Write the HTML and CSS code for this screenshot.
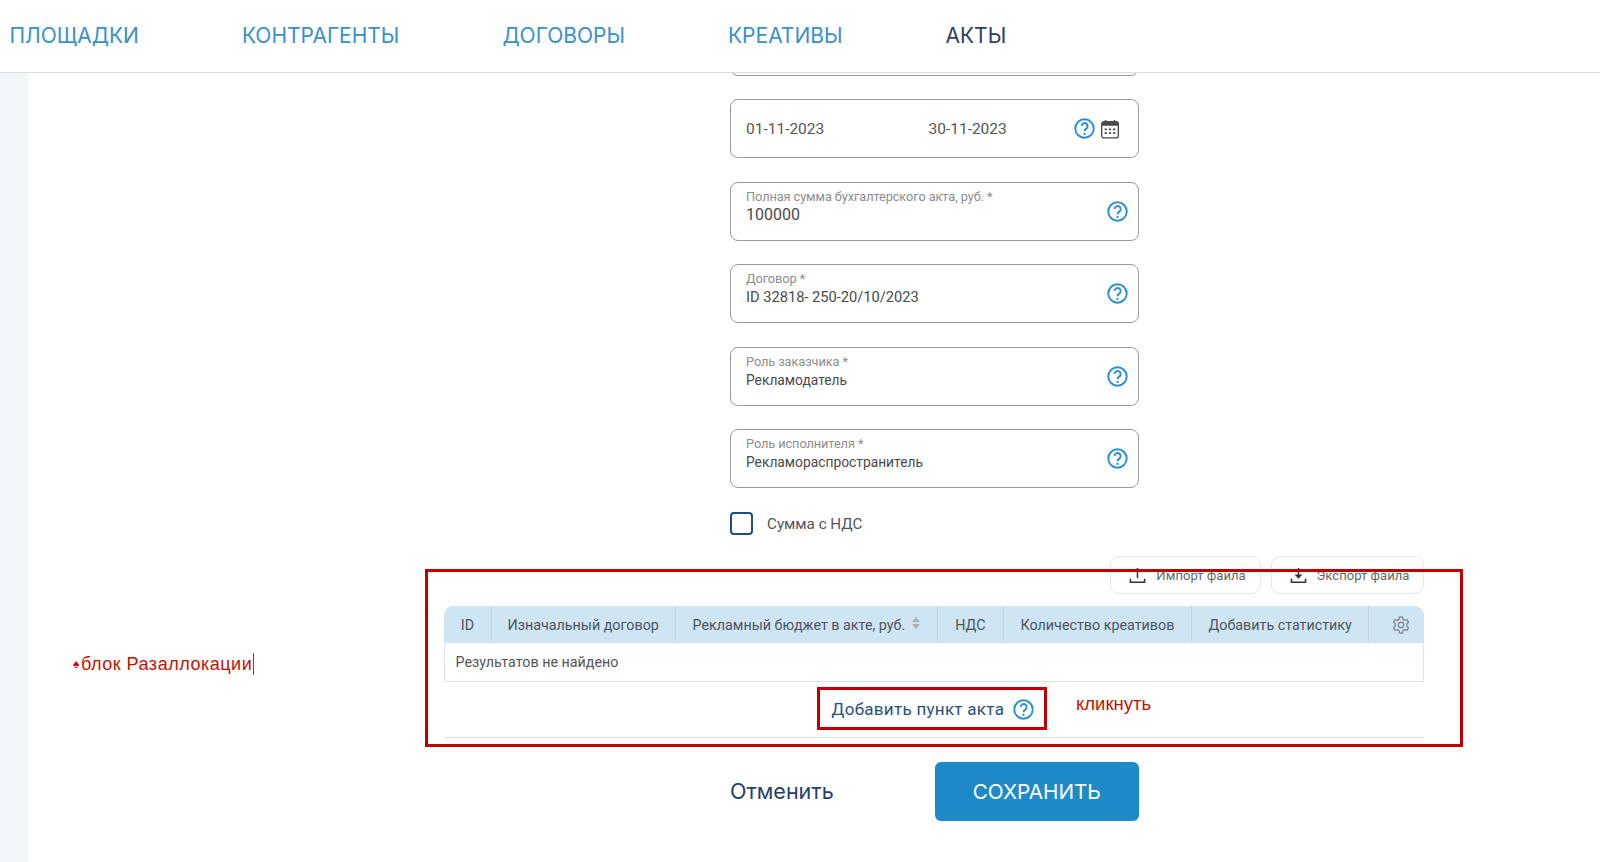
FILE: index.html
```html
<!DOCTYPE html>
<html lang="ru">

<head>
    <meta charset="UTF-8">
    <meta name="viewport" content="width=device-width, initial-scale=1.0">
    <title>Акты</title>
    <link rel="stylesheet" href="styles.css">
</head>

<body>
    <svg class="sprite" aria-hidden="true">
        <symbol id="i-help" viewBox="0 0 20 20">
            <circle cx="10" cy="10" r="8.8" fill="none" stroke="currentColor" stroke-width="1.8" />
            <path d="M7.2 7.7a2.9 2.9 0 1 1 4.5 2.4c-1.1.7-1.7 1.2-1.7 2.6" fill="none" stroke="currentColor" stroke-width="1.8" />
            <circle cx="10" cy="15.2" r="1.1" fill="currentColor" />
        </symbol>
        <symbol id="i-calendar" viewBox="0 0 18 18">
            <rect x="1.500" y="2.500" width="15" height="14.500" rx="2" fill="none" stroke="currentColor" stroke-width="1.200" />
            <path d="M1.500 6h15v-2l-1-1.500h-13l-1 1.500z" fill="currentColor" />
            <path d="M5 .8v3M13 .8v3" stroke="currentColor" stroke-width="1.300" />
            <path d="M4.200 8.500h2v1.600h-2zM8 8.500h2v1.600h-2zM11.800 8.500h2v1.600h-2zM4.200 12h2v1.600h-2zM8 12h2v1.600h-2zM11.800 12h2v1.600h-2z" fill="currentColor" />
        </symbol>
        <symbol id="i-upload" viewBox="0 0 18 18">
            <path d="M9 12V2M5.500 5.200 9 1.800l3.500 3.400M1.500 12.500v3.700h15v-3.700" fill="none" stroke="currentColor" stroke-width="1.600" />
        </symbol>
        <symbol id="i-download" viewBox="0 0 18 18">
            <path d="M9 1v10" fill="none" stroke="currentColor" stroke-width="1.600" />
            <path d="M4.800 8h8.400L9 12.500z" fill="currentColor" />
            <path d="M1.500 12.500v3.700h15v-3.700" fill="none" stroke="currentColor" stroke-width="1.600" />
        </symbol>
        <symbol id="i-gear" viewBox="0 0 18 18">
            <circle cx="9" cy="9" r="2.700" fill="none" stroke="currentColor" stroke-width="1.400" />
            <path d="M7.500 1h3l.5 2.300 1.700 1 2.300-.7 1.500 2.600-1.700 1.600v2.400l1.700 1.600-1.500 2.600-2.300-.7-1.700 1-.5 2.300h-3l-.5-2.300-1.700-1-2.300.7-1.500-2.600 1.700-1.600v-2.400l-1.700-1.600 1.500-2.600 2.300.7 1.700-1z" fill="none" stroke="currentColor" stroke-width="1.400" stroke-linejoin="round" />
        </symbol>
    </svg>

    <header class="topbar">
        <nav class="nav">
            <a class="nav-link">ПЛОЩАДКИ</a>
            <a class="nav-link">КОНТРАГЕНТЫ</a>
            <a class="nav-link">ДОГОВОРЫ</a>
            <a class="nav-link">КРЕАТИВЫ</a>
            <a class="nav-link active">АКТЫ</a>
        </nav>
    </header>

    <div class="layout">
        <aside class="sidebar"></aside>

        <main class="content">
            <div class="note-left"><span class="note-mark">♠</span>блок Разаллокации<span class="caret"></span></div>

            <form class="form-col">
                <div class="field field-cut"></div>

                <div class="field field-date">
                    <span class="date-val date-from">01-11-2023</span>
                    <span class="date-val">30-11-2023</span>
                    <svg class="icon-help"><use href="#i-help" /></svg>
                    <svg class="icon-cal"><use href="#i-calendar" /></svg>
                </div>

                <div class="field">
                    <div class="field-body">
                        <div class="field-label">Полная сумма бухгалтерского акта, руб. *</div>
                        <div class="field-value value-big">100000</div>
                    </div>
                    <svg class="icon-help"><use href="#i-help" /></svg>
                </div>

                <div class="field">
                    <div class="field-body">
                        <div class="field-label">Договор *</div>
                        <div class="field-value">ID 32818- 250-20/10/2023</div>
                    </div>
                    <svg class="icon-help"><use href="#i-help" /></svg>
                </div>

                <div class="field">
                    <div class="field-body">
                        <div class="field-label">Роль заказчика *</div>
                        <div class="field-value value-role">Рекламодатель</div>
                    </div>
                    <svg class="icon-help"><use href="#i-help" /></svg>
                </div>

                <div class="field">
                    <div class="field-body">
                        <div class="field-label">Роль исполнителя *</div>
                        <div class="field-value value-role">Рекламораспространитель</div>
                    </div>
                    <svg class="icon-help"><use href="#i-help" /></svg>
                </div>

                <label class="check-row">
                    <span class="check-box"></span>
                    <span>Сумма с НДС</span>
                </label>
            </form>

            <section class="realloc">
                <div class="file-actions">
                    <button class="file-btn" type="button"><svg class="icon-file"><use href="#i-upload" /></svg>Импорт файла</button>
                    <button class="file-btn btn-export" type="button"><svg class="icon-file"><use href="#i-download" /></svg>Экспорт файла</button>
                </div>

                <table class="grid">
                    <thead>
                        <tr>
                            <th class="col-id">ID</th>
                            <th class="col-contract">Изначальный договор</th>
                            <th class="col-budget">Рекламный бюджет в акте, руб. <span class="sort"><i class="sort-up"></i><i class="sort-down"></i></span></th>
                            <th class="col-vat">НДС</th>
                            <th class="col-count">Количество креативов</th>
                            <th class="col-stat">Добавить статистику</th>
                            <th class="col-gear"><svg class="icon-gear"><use href="#i-gear" /></svg></th>
                        </tr>
                    </thead>
                    <tbody>
                        <tr>
                            <td colspan="7">Результатов не найдено</td>
                        </tr>
                    </tbody>
                </table>

                <div class="add-row">
                    <a class="add-link">Добавить пункт акта</a>
                    <svg class="icon-help"><use href="#i-help" /></svg>
                    <span class="note-box"></span>
                    <span class="note-click">кликнуть</span>
                </div>

                <div class="red-frame"></div>
            </section>

            <div class="form-actions">
                <a class="cancel">Отменить</a>
                <button class="save" type="button">СОХРАНИТЬ</button>
            </div>
        </main>
    </div>
</body>

</html>
```

FILE: styles.css
```css
body {
    margin: 0;
    height: 100vh;
    display: flex;
    flex-direction: column;
    overflow: hidden;
    background: #fff;
    color: #444;
    font-family: Roboto, Arial, sans-serif;
}

.sprite {
    display: none;
}

/* Шапка */
.topbar {
    height: 72px;
    flex: none;
    display: flex;
    align-items: center;
    border-bottom: 1px solid #dcdfe2;
    box-sizing: content-box;
}

.nav {
    display: flex;
    gap: 103px;
    padding: 0 0 1px 9.500px;
}

.nav-link {
    font-family: Inter, sans-serif;
    font-size: 21px;
    color: #3a90cc;
}

.nav-link.active {
    color: #2c3f5e;
}

.layout {
    flex: 1;
    display: flex;
    min-height: 0;
}

.sidebar {
    width: 28px;
    flex: none;
    background: #f2f6f9;
}

.content {
    flex: 1;
    position: relative;
    overflow: hidden;
    padding-left: 416px;
}

/* Форма */
.form-col {
    width: 409px;
    margin: -56.500px 0 0 286px;
    display: flex;
    flex-direction: column;
    gap: 23.500px;
}

.field {
    height: 59px;
    box-sizing: border-box;
    flex: none;
    display: flex;
    align-items: center;
    padding: 0 10px 0 15px;
    border: 1px solid #999;
    border-radius: 8px;
}

.field-date {
    padding-right: 18px;
}

.date-val {
    flex: none;
    padding-top: 1px;
    font-size: 15.500px;
    color: #555;
}

.date-from {
    width: 182.500px;
}

.field-date .icon-help {
    margin-left: auto;
    margin-right: 5px;
}

.field-body {
    flex: 1;
    align-self: flex-start;
    padding-top: 6px;
}

.field-label {
    font-size: 12.800px;
    letter-spacing: -0.100px;
    line-height: 16px;
    color: #8d8d8d;
}

.field-value {
    font-size: 14.650px;
    line-height: 20px;
    color: #4a4a4a;
}

.value-big {
    font-size: 16px;
}

.value-role {
    font-size: 13.800px;
}

.icon-help {
    width: 21px;
    height: 21px;
    flex: none;
    color: #2a8fd0;
}

.icon-cal {
    width: 20px;
    height: 20px;
    flex: none;
    color: #4a4a4a;
}

.check-row {
    display: flex;
    align-items: center;
    gap: 14px;
    height: 23px;
    margin-top: 0.500px;
    font-size: 15.200px;
    color: #555;
}

.check-box {
    width: 23px;
    height: 23px;
    box-sizing: border-box;
    border: 2px solid #1d4e85;
    border-radius: 4px;
}

/* Блок разаллокации */
.realloc {
    position: relative;
    width: 979.500px;
    margin-top: 20.700px;
    border-bottom: 1px solid #dedede;
}

.file-actions {
    display: flex;
    justify-content: flex-end;
    gap: 10px;
    margin-bottom: 12px;
}

.file-btn {
    height: 38.600px;
    width: 151px;
    display: flex;
    align-items: center;
    justify-content: center;
    gap: 10px;
    padding: 2px 0 0 5px;
    border: 1px solid #e6e6e6;
    border-radius: 9px;
    background: #fff;
    font: 13.100px Roboto, Arial, sans-serif;
    color: #666;
}

.btn-export {
    width: 153px;
}

.icon-file {
    width: 17px;
    height: 17px;
    color: #333;
}

.grid {
    width: 100%;
    table-layout: fixed;
    border-collapse: separate;
    border-spacing: 0;
    font-size: 14.300px;
}

.grid th {
    box-sizing: border-box;
    height: 36.600px;
    padding: 0;
    background: #d0e5f3;
    border-right: 1.500px solid #c7d4dc;
    font-weight: 400;
    color: #4a5560;
    white-space: nowrap;
}

.grid th:first-child {
    border-top-left-radius: 9px;
}

.grid th:last-child {
    border-top-right-radius: 9px;
    border-right: 0;
}

.grid td {
    height: 38px;
    padding: 0 0 0 10.500px;
    border: 1px solid #e2e2e2;
    border-top: 0;
    color: #555;
}

.col-id { width: 47.800px; }
.col-contract { width: 183.800px; }
.col-budget { width: 262.200px; }
.col-vat { width: 66.200px; }
.col-count { width: 188px; }
.col-stat { width: 177.400px; }

.grid .col-gear {
    padding-left: 10px;
}

.sort {
    display: inline-block;
    vertical-align: 1px;
    margin-left: 3px;
}

.sort i {
    display: block;
    width: 0;
    border-left: 4px solid transparent;
    border-right: 4px solid transparent;
}

.sort-up {
    border-bottom: 5px solid #a8b3bb;
    margin-bottom: 2px;
}

.sort-down {
    border-top: 5px solid #a8b3bb;
}

.icon-gear {
    width: 18px;
    height: 18px;
    vertical-align: middle;
    color: #868c91;
}

.add-row {
    position: relative;
    height: 55px;
    display: flex;
    align-items: center;
    padding-left: 387.600px;
    gap: 9px;
}

.add-link {
    font-size: 17px;
    letter-spacing: 0.280px;
    color: #2a4f7d;
}

/* Красные пометки поверх интерфейса */
.red-frame {
    position: absolute;
    left: -19.500px;
    top: 13.500px;
    width: 1038.500px;
    height: 178px;
    box-sizing: border-box;
    border: 3px solid #c00000;
}

.note-box {
    position: absolute;
    left: 373.400px;
    top: 5px;
    width: 229.600px;
    height: 43px;
    box-sizing: border-box;
    border: 3px solid #c00000;
}

.note-click {
    position: absolute;
    left: 632px;
    top: 11px;
    font: 18.500px "Liberation Sans", Arial, sans-serif;
    color: #c41200;
}

.note-left {
    position: absolute;
    left: 45px;
    top: 580px;
    font: 18px "Liberation Sans", Arial, sans-serif;
    letter-spacing: 0.520px;
    color: #c41200;
    display: flex;
    align-items: center;
}

.note-mark {
    font-size: 12px;
    margin-right: 1px;
}

.caret {
    width: 1px;
    height: 22px;
    margin-left: 1px;
    background: #555;
}

/* Кнопки формы */
.form-actions {
    display: flex;
    align-items: center;
    width: 409px;
    margin: 24px 0 0 286px;
    justify-content: space-between;
}

.cancel {
    font-family: Inter, sans-serif;
    font-size: 21.500px;
    color: #23406e;
}

.save {
    width: 204.500px;
    height: 59px;
    border: 0;
    border-radius: 6px;
    background: #1f8aca;
    color: #fff;
    font: 20.700px Inter, sans-serif;
}
```
